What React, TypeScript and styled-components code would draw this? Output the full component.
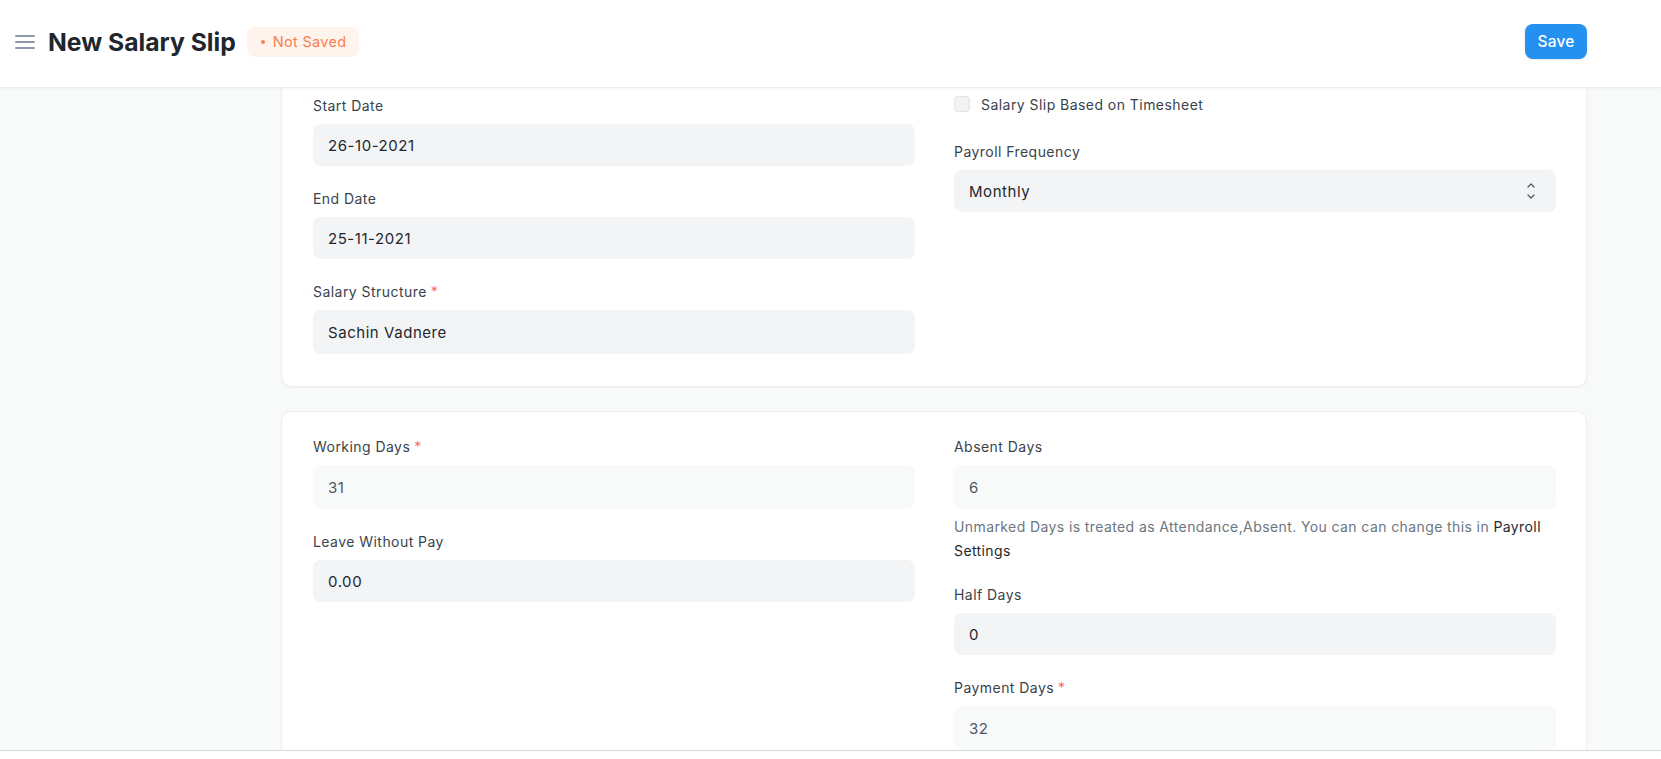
import React from "react";
import styled, { createGlobalStyle } from "styled-components";

const GlobalStyle = createGlobalStyle`
  html, body { margin: 0; padding: 0; background: #ffffff; }
  body { font-family: Inter, "Noto Sans", sans-serif; color: #1f272e; -webkit-font-smoothing: antialiased; }
  * { box-sizing: border-box; }
`;

const Shell = styled.div`
  height: 759px;
  display: flex;
  flex-direction: column;
  overflow: hidden;
`;

const Header = styled.header`
  height: 88px;
  flex: 0 0 88px;
  background: #ffffff;
  border-bottom: 1px solid #ebeef0;
  box-shadow: 0 1px 3px rgba(0, 0, 0, 0.04);
  position: relative;
  z-index: 2;
`;

const HeaderInner = styled.div`
  width: 1587px;
  height: 100%;
  padding: 0 0 4px 15px;
  display: flex;
  align-items: center;
`;

const Hamburger = styled.button`
  width: 20px;
  height: 20px;
  border: 0;
  padding: 0;
  background: transparent;
  display: flex;
  align-items: center;
  justify-content: center;
  margin-right: 13px;
`;

const Title = styled.h1`
  margin: 0;
  font-size: 24.7px;
  font-weight: 700;
  color: #1f272e;
  letter-spacing: 0;
`;

const Badge = styled.span`
  margin-left: 11px;
  height: 30px;
  padding: 0 13px 0 14px;
  border-radius: 8px;
  background: #fff3ed;
  color: #f8804f;
  font-size: 14.5px;
  letter-spacing: 0.3px;
  display: inline-flex;
  align-items: center;
  gap: 8px;
`;

const Dot = styled.span`
  width: 4px;
  height: 4px;
  border-radius: 50%;
  background: #f8804f;
`;

const Spacer = styled.div`
  flex: 1;
`;

const PrimaryButton = styled.button`
  height: 35px;
  width: 62px;
  border: 0;
  border-radius: 8px;
  background: #2490ef;
  color: #ffffff;
  font-family: Inter, sans-serif;
  font-size: 15.5px;
  font-weight: 500;
  letter-spacing: 0.2px;
  box-shadow: 0 1px 2px rgba(0, 0, 0, 0.1);
`;

const Main = styled.main`
  flex: 0 0 663px;
  height: 663px;
  background: #f8f9f9;
  border-bottom: 1px solid #d4d7d9;
  overflow: hidden;
`;

const Layout = styled.div`
  width: 1587px;
  padding-left: 15px;
  display: grid;
  grid-template-columns: 266px 1306px;
`;

const Sidebar = styled.aside``;

const Content = styled.div`
  display: flex;
  flex-direction: column;
  gap: 24px;
`;

const Card = styled.section<{ $clipTop?: boolean }>`
  background: #ffffff;
  border: 1px solid #eceef0;
  border-radius: ${(p) => (p.$clipTop ? "0 0 10px 10px" : "10px")};
  border-top-width: ${(p) => (p.$clipTop ? "0" : "1px")};
  box-shadow: 0 1px 2px rgba(0, 0, 0, 0.04);
  padding: ${(p) => (p.$clipTop ? "8px 31px 32px 31px" : "25px 31px 30px 31px")};
  display: grid;
  grid-template-columns: 602px 602px;
  column-gap: 39px;
  align-items: start;
`;

const Column = styled.div`
  display: flex;
  flex-direction: column;
  gap: 23px;
`;

const Field = styled.div`
  display: flex;
  flex-direction: column;
`;

const Label = styled.label`
  font-size: 14px;
  letter-spacing: 0.45px;
  line-height: 20px;
  height: 20px;
  color: #3a434c;
  margin-bottom: 8px;
`;

const Req = styled.span`
  color: #f56b6b;
  margin-left: 4px;
`;

const Input = styled.div<{ $readOnly?: boolean; $tall?: boolean }>`
  height: ${(p) => (p.$readOnly || p.$tall ? "44px" : "42px")};
  border-radius: 8px;
  background: ${(p) => (p.$readOnly ? "#f8f9f9" : "#f3f4f5")};
  color: ${(p) => (p.$readOnly ? "#4c5a67" : "#1f272e")};
  font-size: 15px;
  letter-spacing: 0.55px;
  padding: 0 15px;
  display: flex;
  align-items: center;
`;

const SelectBox = styled(Input)`
  justify-content: space-between;
  padding-right: 20px;
`;

const Help = styled.p`
  margin: 6px 0 -1px 0;
  font-size: 14px;
  letter-spacing: 0.4px;
  line-height: 24px;
  color: #6c7680;
`;

const HelpLink = styled.span`
  color: #1f272e;
`;

const CheckRow = styled.label`
  display: flex;
  align-items: center;
  height: 16px;
  gap: 11px;
  font-size: 14px;
  letter-spacing: 0.45px;
  color: #3a434c;
  margin-bottom: 7px;
`;

const CheckBox = styled.span`
  width: 16px;
  height: 16px;
  border-radius: 4px;
  border: 1px solid #dfe3e6;
  background: #f1f3f4;
`;

const MenuIcon = () => (
  <svg width="20" height="16" viewBox="0 0 20 16">
    <g stroke="#8d99a6" strokeWidth="2" strokeLinecap="round">
      <line x1="1" y1="2" x2="19" y2="2" />
      <line x1="1" y1="8" x2="19" y2="8" />
      <line x1="1" y1="14" x2="19" y2="14" />
    </g>
  </svg>
);

const UpDownIcon = () => (
  <svg width="10" height="18" viewBox="0 0 10 18">
    <g fill="none" stroke="#4c5a67" strokeWidth="1.3" strokeLinecap="round" strokeLinejoin="round">
      <polyline points="2,5 5,2 8,5" />
      <polyline points="2,13 5,16 8,13" />
    </g>
  </svg>
);

export default function App() {
  return (
    <>
      <GlobalStyle />
      <Shell>
        <Header>
          <HeaderInner>
            <Hamburger aria-label="menu">
              <MenuIcon />
            </Hamburger>
            <Title>New Salary Slip</Title>
            <Badge>
              <Dot />
              Not Saved
            </Badge>
            <Spacer />
            <PrimaryButton>Save</PrimaryButton>
          </HeaderInner>
        </Header>
        <Main>
          <Layout>
            <Sidebar />
            <Content>
              <Card $clipTop>
                <Column>
                  <Field>
                    <Label>Start Date</Label>
                    <Input>26-10-2021</Input>
                  </Field>
                  <Field>
                    <Label>End Date</Label>
                    <Input>25-11-2021</Input>
                  </Field>
                  <Field>
                    <Label>
                      Salary Structure<Req>*</Req>
                    </Label>
                    <Input $tall>Sachin Vadnere</Input>
                  </Field>
                </Column>
                <Column>
                  <CheckRow>
                    <CheckBox />
                    Salary Slip Based on Timesheet
                  </CheckRow>
                  <Field>
                    <Label>Payroll Frequency</Label>
                    <SelectBox>
                      Monthly
                      <UpDownIcon />
                    </SelectBox>
                  </Field>
                </Column>
              </Card>
              <Card>
                <Column>
                  <Field>
                    <Label>
                      Working Days<Req>*</Req>
                    </Label>
                    <Input $readOnly>31</Input>
                  </Field>
                  <Field>
                    <Label>Leave Without Pay</Label>
                    <Input>0.00</Input>
                  </Field>
                </Column>
                <Column>
                  <Field>
                    <Label>Absent Days</Label>
                    <Input $readOnly>6</Input>
                    <Help>
                      Unmarked Days is treated as Attendance,Absent. You can can change this in{" "}
                      <HelpLink>Payroll</HelpLink> <HelpLink>Settings</HelpLink>
                    </Help>
                  </Field>
                  <Field>
                    <Label>Half Days</Label>
                    <Input>0</Input>
                  </Field>
                  <Field>
                    <Label>
                      Payment Days<Req>*</Req>
                    </Label>
                    <Input $readOnly>32</Input>
                  </Field>
                </Column>
              </Card>
            </Content>
          </Layout>
        </Main>
      </Shell>
    </>
  );
}
